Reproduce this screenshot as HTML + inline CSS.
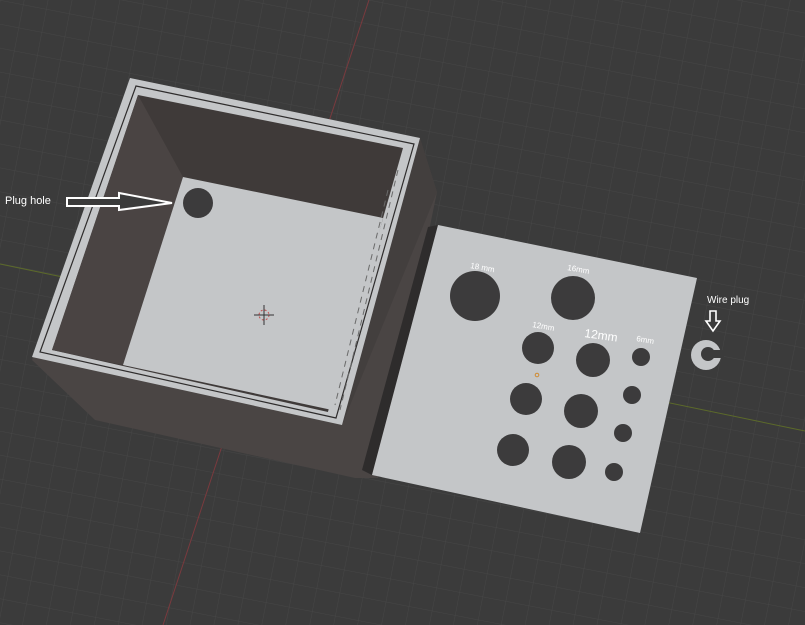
<!DOCTYPE html>
<html><head><style>html,body{margin:0;padding:0;background:#3b3b3b;overflow:hidden}svg{display:block}</style></head>
<body>
<svg width="805" height="625" viewBox="0 0 805 625" xmlns="http://www.w3.org/2000/svg">
<defs>
<pattern id="g" width="23.5" height="23.5" patternUnits="userSpaceOnUse" patternTransform="rotate(11)">
<rect width="23.5" height="23.5" fill="#3b3b3b"/>
<path d="M0 0H23.5M0 0V23.5" stroke="#464646" stroke-width="1" fill="none"/>
</pattern>
</defs>
<rect width="805" height="625" fill="url(#g)"/>
<line x1="369" y1="0" x2="163" y2="625" stroke="#7a3a3e" stroke-width="1"/>
<line x1="0" y1="264" x2="805" y2="431" stroke="#5c6a2a" stroke-width="1"/>
<!-- box -->
<polygon points="130,78 420,138 437,192 378,478 355,478 95,420 32,360" fill="#4a4544"/>
<polygon points="342,425 437,192 420,138" fill="#433f3e"/>
<polygon points="130,78 420,138 342,425 32,357" fill="#c4c6c8"/>
<polygon points="136,86 414,144 336,418 40,352" fill="none" stroke="#2e2c2c" stroke-width="1.2"/>
<polygon points="138,95 403,148 328,412 52,350" fill="#3f3a39"/>
<polygon points="138,95 183,177 123,365 52,350" fill="#4a4443"/>
<polygon points="183,177 383,218 332,410 123,365" fill="#c4c6c8"/>
<polygon points="383,218 403,148 328,412 332,410" fill="#c4c6c8"/>
<line x1="388" y1="190" x2="335" y2="405" stroke="#6a6a6a" stroke-dasharray="6 5"/>
<line x1="398" y1="170" x2="340" y2="410" stroke="#6a6a6a" stroke-dasharray="6 5"/>
<circle cx="198" cy="203" r="15" fill="#3c3b3c"/>
<g stroke="#c05050" stroke-width="1" fill="none"><circle cx="264" cy="315" r="5" stroke-dasharray="2 2"/></g>
<path d="M254 315H274M264 305V325" stroke="#333" stroke-width="1"/>
<!-- arrow -->
<polygon points="67,198 119,198 119,193 172,203 119,210 119,206 67,206" fill="#3b3b3b" stroke="#fff" stroke-width="2"/>
<text x="5" y="204" font-family="Liberation Sans, sans-serif" font-size="11" fill="#fff">Plug hole</text>
<!-- panel -->
<polygon points="438,225 428,227 362,470 372,475" fill="#2e2c2c"/>
<polygon points="438,225 697,278 640,533 372,475" fill="#c4c6c8"/>
<g fill="#3c3b3c">
<circle cx="475" cy="296" r="25"/><circle cx="573" cy="298" r="22"/>
<circle cx="538" cy="348" r="16"/><circle cx="593" cy="360" r="17"/><circle cx="641" cy="357" r="9"/>
<circle cx="526" cy="399" r="16"/><circle cx="581" cy="411" r="17"/><circle cx="632" cy="395" r="9"/>
<circle cx="513" cy="450" r="16"/><circle cx="569" cy="462" r="17"/><circle cx="623" cy="433" r="9"/><circle cx="614" cy="472" r="9"/>
</g>
<circle cx="537" cy="375" r="1.8" fill="none" stroke="#d08a30"/>
<g font-family="Liberation Sans, sans-serif" fill="#fff">
<text x="470" y="268" font-size="8" transform="rotate(10 470 268)">18 mm</text>
<text x="567" y="270" font-size="8" transform="rotate(10 567 270)">16mm</text>
<text x="532" y="327" font-size="8" transform="rotate(10 532 327)">12mm</text>
<text x="584" y="337" font-size="12" transform="rotate(8 584 337)">12mm</text>
<text x="636" y="341" font-size="8" transform="rotate(10 636 341)">6mm</text>
<text x="707" y="303" font-size="10">Wire plug</text>
</g>
<!-- wire plug -->
<circle cx="706" cy="355" r="15" fill="#c4c6c8"/>
<circle cx="708" cy="354" r="7" fill="#3b3b3b"/>
<rect x="708" y="350" width="16" height="8" fill="#3b3b3b"/>
<polygon points="710,311 716,311 716,321 720,321 713,331 706,321 710,321" fill="#3b3b3b" stroke="#fff" stroke-width="1.6"/>
</svg>
</body></html>
